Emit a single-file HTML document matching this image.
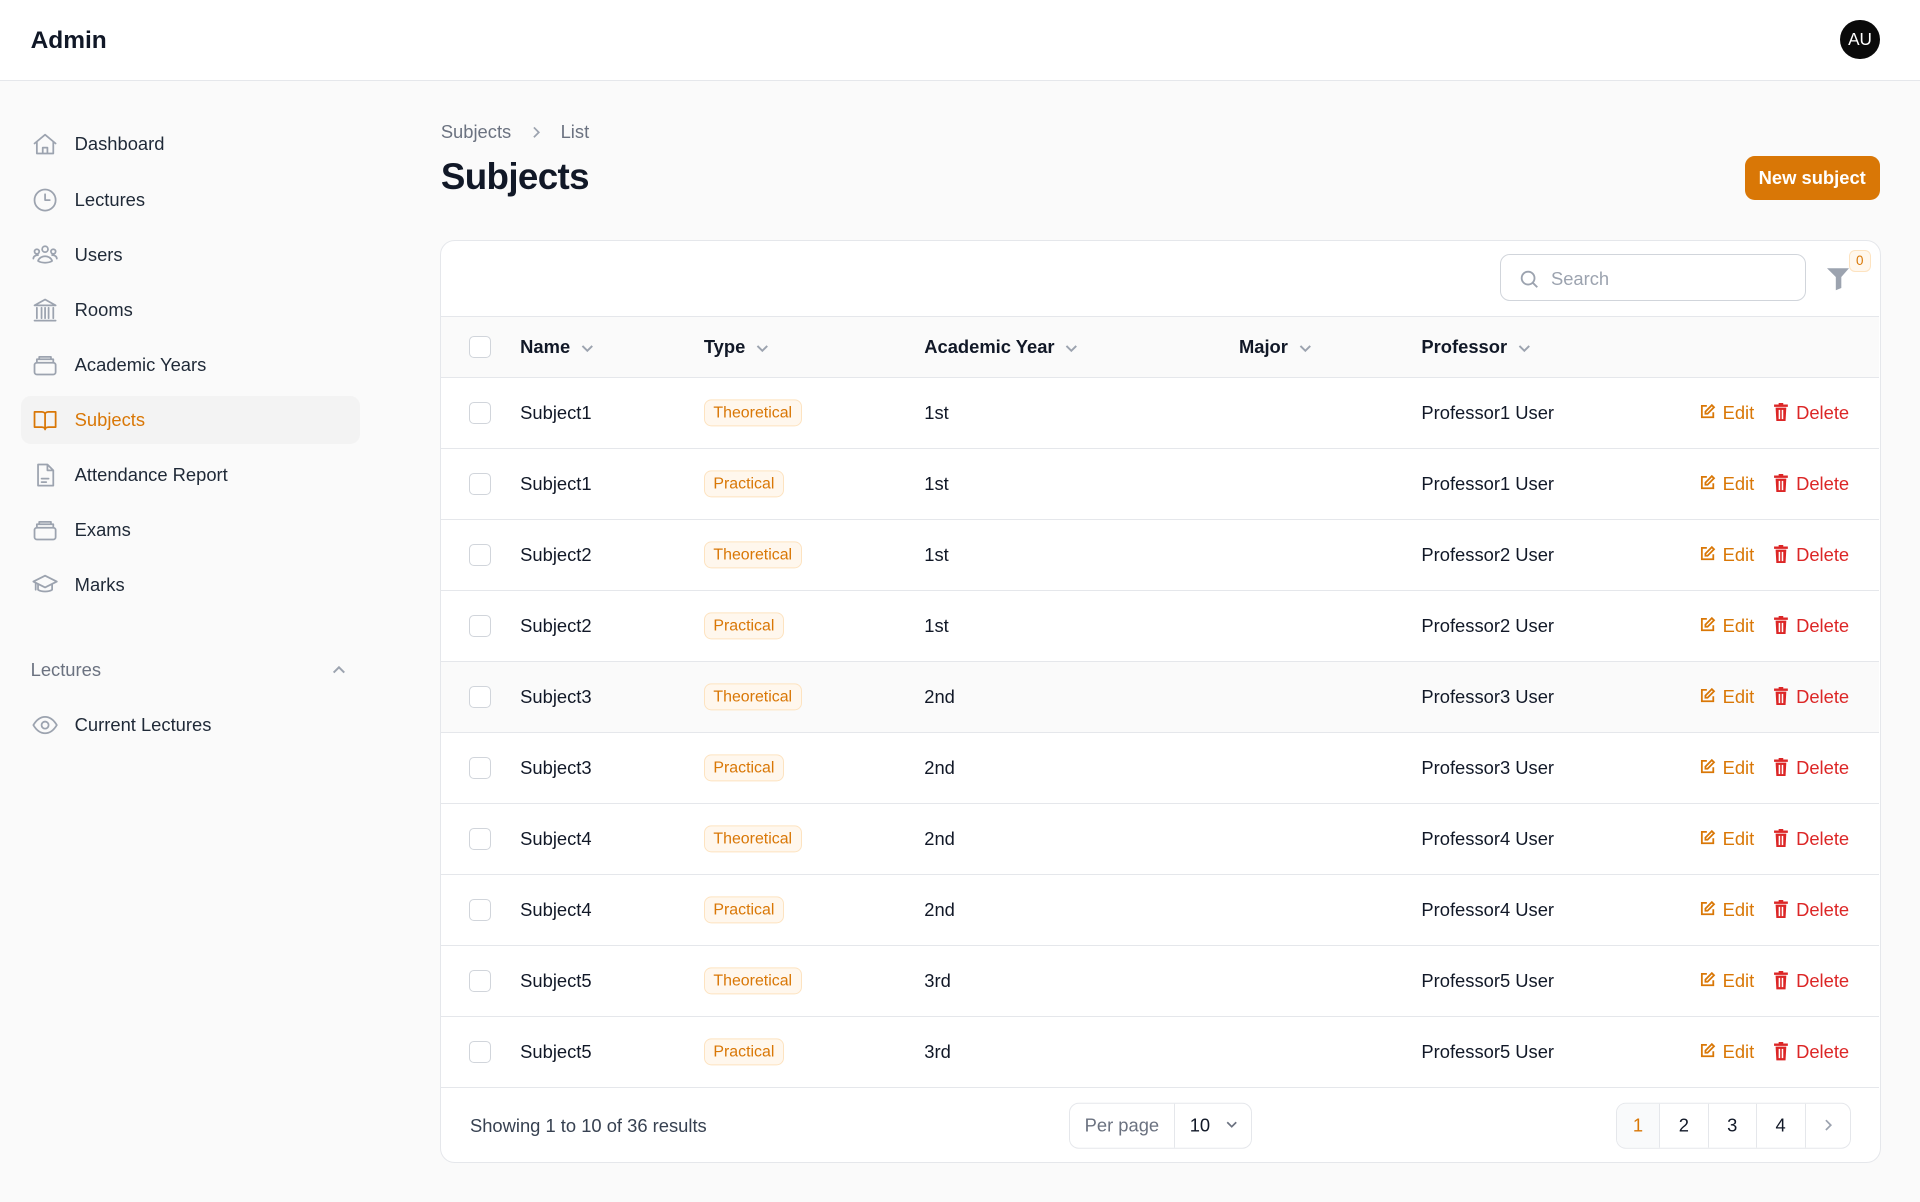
<!DOCTYPE html>
<html><head><meta charset="utf-8"><style>
html{zoom:1.22449}
*{box-sizing:border-box;margin:0;padding:0}
body{width:1568px;height:982px;background:#fafafa;font-family:"Liberation Sans",sans-serif;color:#111827;position:relative;overflow:hidden;font-size:15px}
.abs{position:absolute}
.top{left:0;top:0;width:1568px;height:66px;background:#fff;border-bottom:1px solid #e5e7eb}
.nav{left:17px;width:277px;height:40px;border-radius:8px;display:flex;align-items:center;padding-left:8px;color:#1f2937;font-size:15px}
.nav svg{width:23px;height:23px;margin-right:13px;fill:none;stroke:#9ca3af;stroke-width:1.5;stroke-linecap:round;stroke-linejoin:round}
.nav.act{background:#f3f3f3;color:#d97706}
.nav.act svg{stroke:#d97706}
.card{left:359px;top:196px;width:1177px;height:754px;background:#fff;border:1px solid #e5e7eb;border-radius:12px;overflow:hidden}
.row{position:absolute;left:0;width:1175px;height:58px;border-top:1px solid #e5e7eb}
.cell{position:absolute;top:50%;transform:translateY(-50%);white-space:nowrap}
.cb{width:18px;height:18px;border:1px solid #d1d5db;border-radius:4px;background:#fff;left:23px}
.badge{font-size:13px;color:#d97706;background:#fff7ed;border:1px solid #fde3c0;border-radius:6px;padding:3px 7px}
.hd{font-weight:bold}
.hd svg{width:12px;height:12px;margin-left:8px;vertical-align:middle;fill:none;stroke:#9ca3af;stroke-width:1.6}
.edit{color:#d97706}
.del{color:#dc2626}
</style></head><body>
<div class="abs top"></div>
<div class="abs" style="left:25px;top:22px;font-size:20px;font-weight:bold">Admin</div>
<div class="abs" style="left:1503px;top:16px;width:32px;height:32px;border-radius:50%;background:#0a0a0a;color:#fff;font-size:14px;display:flex;align-items:center;justify-content:center">AU</div>

<div class="abs nav" style="top:98px"><svg viewBox="0 0 24 24"><path d="M3 11.5L12 4l9 7.5M5 10v10h14V10M10 20v-5h4v5"/></svg>Dashboard</div>
<div class="abs nav" style="top:143px"><svg viewBox="0 0 24 24"><circle cx="12" cy="12" r="9"/><path d="M12 7v5h4"/></svg>Lectures</div>
<div class="abs nav" style="top:188px"><svg viewBox="0 0 24 24"><circle cx="12" cy="7" r="2.5"/><circle cx="5" cy="9" r="2"/><circle cx="19" cy="9" r="2"/><path d="M6 17c1-3 4-4 6-4s5 1 6 4c-3 2-9 2-12 0zM2 15c0-2 2-3 4-3M22 15c0-2-2-3-4-3"/></svg>Users</div>
<div class="abs nav" style="top:233px"><svg viewBox="0 0 24 24"><path d="M3 8l9-5 9 5H3zM5 10v9M9 10v9M12 10v9M15 10v9M19 10v9M3 21h18"/></svg>Rooms</div>
<div class="abs nav" style="top:278px"><svg viewBox="0 0 24 24"><rect x="3" y="10" width="18" height="10" rx="2"/><path d="M5 10V7h14v3M7 7V5h10v2"/></svg>Academic Years</div>
<div class="abs nav act" style="top:323px"><svg viewBox="0 0 24 24"><path d="M3 5h6c2 0 3 1 3 2v13c0-1-1-2-3-2H3zM21 5h-6c-2 0-3 1-3 2v13c0-1 1-2 3-2h6z"/></svg>Subjects</div>
<div class="abs nav" style="top:368px"><svg viewBox="0 0 24 24"><path d="M6 3h8l5 5v13H6zM14 3v5h5M9 15h6M9 18h4"/></svg>Attendance Report</div>
<div class="abs nav" style="top:413px"><svg viewBox="0 0 24 24"><rect x="3" y="10" width="18" height="10" rx="2"/><path d="M5 10V7h14v3M7 7V5h10v2"/></svg>Exams</div>
<div class="abs nav" style="top:458px"><svg viewBox="0 0 24 24"><path d="M2 9l10-5 10 5-10 5zM6 11v5c3 2 9 2 12 0v-5M4 10v6"/></svg>Marks</div>
<div class="abs" style="left:25px;top:538px;color:#6b7280;font-size:15px">Lectures</div>
<svg class="abs" style="left:270px;top:541px" width="13" height="13" viewBox="0 0 12 12" fill="none" stroke="#9ca3af" stroke-width="1.5"><path d="M2 8l4-4 4 4"/></svg>
<div class="abs nav" style="top:572px"><svg viewBox="0 0 24 24"><path d="M2 12c3-5 6-7 10-7s7 2 10 7c-3 5-6 7-10 7s-7-2-10-7z"/><circle cx="12" cy="12" r="3"/></svg>Current Lectures</div>

<div class="abs" style="left:360px;top:99px;color:#6b7280;font-size:15px">Subjects <svg width="12" height="12" viewBox="0 0 12 12" fill="none" stroke="#9ca3af" stroke-width="1.4" style="margin:0 10px;vertical-align:-1px"><path d="M4 2l4 4-4 4"/></svg> List</div>
<div class="abs" style="left:360px;top:127px;font-size:30px;font-weight:bold;letter-spacing:-0.5px">Subjects</div>
<div class="abs" style="left:1425px;top:127px;width:110px;height:36px;background:#d97706;color:#fff;border-radius:8px;font-weight:bold;font-size:15px;display:flex;align-items:center;justify-content:center">New subject</div>

<div class="abs card">
 <div class="abs" style="left:865px;top:11px;width:250px;height:38px;border:1px solid #d1d5db;border-radius:8px;color:#9ca3af;padding:10px 0 0 41px">Search
  <svg class="abs" style="left:14px;top:10px" width="18" height="18" viewBox="0 0 24 24" fill="none" stroke="#9ca3af" stroke-width="2"><circle cx="11" cy="11" r="7"/><path d="M16 16l5 5"/></svg></div>
 <svg class="abs" style="left:1132px;top:21px" width="18" height="20" viewBox="0 0 20 22" fill="#9ca3af"><path d="M0 1h20l-7 8v10l-5 2V9z"/></svg>
 <div class="abs" style="left:1150px;top:7px;width:18px;height:18px;border:1px solid #fde3c0;background:#fff7ed;border-radius:5px;color:#d97706;font-size:11px;text-align:center;line-height:16px">0</div>
 <div class="row" style="top:61px;height:50px;background:#fafafa">
  <div class="cell cb"></div>
  <div class="cell hd" style="left:65px">Name<svg viewBox="0 0 12 12"><path d="M2 4l4 4 4-4"/></svg></div>
  <div class="cell hd" style="left:215px">Type<svg viewBox="0 0 12 12"><path d="M2 4l4 4 4-4"/></svg></div>
  <div class="cell hd" style="left:395px">Academic Year<svg viewBox="0 0 12 12"><path d="M2 4l4 4 4-4"/></svg></div>
  <div class="cell hd" style="left:652px">Major<svg viewBox="0 0 12 12"><path d="M2 4l4 4 4-4"/></svg></div>
  <div class="cell hd" style="left:801px">Professor<svg viewBox="0 0 12 12"><path d="M2 4l4 4 4-4"/></svg></div>
 </div>
 <div id="rows"></div>
 <div class="row" style="top:691px;height:62px">
  <div class="cell" style="left:24px;color:#374151">Showing 1 to 10 of 36 results</div>
  <div class="cell" style="left:513px;width:150px;height:38px;border:1px solid #e5e7eb;border-radius:8px;display:flex">
   <div style="width:86px;border-right:1px solid #e5e7eb;color:#6b7280;text-align:center;line-height:36px">Per page</div>
   <div style="padding-left:12px;line-height:36px">10 <svg width="11" height="11" viewBox="0 0 12 12" fill="none" stroke="#6b7280" stroke-width="1.5" style="margin-left:8px"><path d="M2 4l4 4 4-4"/></svg></div>
  </div>
  <div class="cell" style="left:960px;width:192px;height:38px;border:1px solid #e5e7eb;border-radius:8px;display:flex;overflow:hidden">
   <div style="width:35px;background:#f9fafb;color:#d97706;text-align:center;line-height:36px;border-right:1px solid #e5e7eb">1</div>
   <div style="width:40px;text-align:center;line-height:36px;border-right:1px solid #e5e7eb">2</div>
   <div style="width:39px;text-align:center;line-height:36px;border-right:1px solid #e5e7eb">3</div>
   <div style="width:40px;text-align:center;line-height:36px;border-right:1px solid #e5e7eb">4</div>
   <div style="flex:1;display:flex;align-items:center;justify-content:center"><svg width="12" height="12" viewBox="0 0 12 12" fill="none" stroke="#9ca3af" stroke-width="1.4"><path d="M4 2l4 4-4 4"/></svg></div>
  </div>
 </div>
</div>
<script>
var d=[["Subject1","Theoretical","1st","Professor1"],["Subject1","Practical","1st","Professor1"],["Subject2","Theoretical","1st","Professor2"],["Subject2","Practical","1st","Professor2"],["Subject3","Theoretical","2nd","Professor3"],["Subject3","Practical","2nd","Professor3"],["Subject4","Theoretical","2nd","Professor4"],["Subject4","Practical","2nd","Professor4"],["Subject5","Theoretical","3rd","Professor5"],["Subject5","Practical","3rd","Professor5"]];
var h="";d.forEach(function(r,i){h+='<div class="row" style="top:'+(111+i*58)+'px'+(i==4?';background:#fafafa':'')+'"><div class="cell cb"></div><div class="cell" style="left:65px">'+r[0]+'</div><div class="cell badge" style="left:215px">'+r[1]+'</div><div class="cell" style="left:395px">'+r[2]+'</div><div class="cell" style="left:801px">'+r[3]+' User</div><div class="cell edit" style="left:1028px"><svg width="14" height="14" viewBox="0 0 24 24" fill="none" stroke="#d97706" stroke-width="2.5" style="vertical-align:-1px;margin-right:5px"><path d="M11 4H4v16h16v-7M18 3l3 3-9 9H9v-3z"/></svg>Edit</div><div class="cell del" style="left:1088px"><svg width="13" height="15" viewBox="0 0 20 24" fill="#dc2626" style="vertical-align:-2px;margin-right:6px"><path d="M7 0h6v2h6v3H1V2h6zM3 6h14l-1 18H4zM7 9v12h2V9zm4 0v12h2V9z"/></svg>Delete</div></div>'});
document.getElementById("rows").innerHTML=h;
</script>
</body></html>
